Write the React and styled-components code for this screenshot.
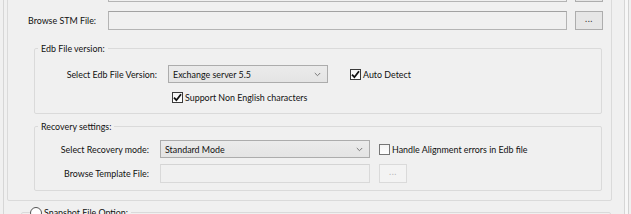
import React from "react";
import styled, { createGlobalStyle } from "styled-components";

const Global = createGlobalStyle`
  html, body { margin: 0; padding: 0; background: #f0f0f0; }
  body { width: 631px; height: 214px; overflow: hidden; font-family: Lato, "Noto Sans", sans-serif; font-size: 8.9px; color: #111; }
  * { box-sizing: border-box; }
`;

const Root = styled.div`
  width: 631px;
  height: 214px;
  overflow: hidden;
  display: flex;
  align-items: flex-start;
`;

const Frame = styled.div`
  margin: -31px 0 0 3px;
  width: 622px;
  height: 260px;
  border-left: 1px solid #d6d6d6;
  border-right: 1px solid #d6d6d6;
  display: flex;
  flex-direction: column;
`;

const Edge = styled.div`
  width: 4px;
  height: 214px;
  background: #f7f7f7;
  border-right: 1px solid #d2d2d2;
`;

const OuterGroup = styled.div`
  margin-left: 3px;
  width: 605px;
  border: 1px solid #dadada;
  border-radius: 2px;
  padding: 13px 7px 9px 20px;
  display: flex;
  flex-direction: column;
`;

const FileRow = styled.div`
  display: flex;
  align-items: center;
  height: 19px;
  margin-bottom: ${(p) => p.$mb || 0}px;
`;

const Label = styled.label`
  width: ${(p) => p.$w}px;
  flex: none;
  text-align: ${(p) => (p.$right ? "right" : "left")};
  margin-right: ${(p) => p.$gap || 0}px;
  white-space: nowrap;
`;

const TextBox = styled.div`
  width: ${(p) => p.$w}px;
  height: 19px;
  flex: none;
  background: #f0f0f0;
  border: 1px solid ${(p) => (p.$disabled ? "#d9d9d9" : "#b4b4b4")};
  border-top-color: ${(p) => (p.$disabled ? "#d4d4d4" : "#a2a2a2")};
`;

const DotsButton = styled.button`
  width: 28px;
  height: 19px;
  flex: none;
  margin-left: ${(p) => p.$ml}px;
  padding: 0 0 4px;
  font-family: inherit;
  font-size: 9px;
  line-height: 1;
  letter-spacing: 0.5px;
  color: ${(p) => (p.disabled ? "#b8b8b8" : "#333")};
  background: ${(p) => (p.disabled ? "#f3f3f3" : "#e6e6e6")};
  border: 1px solid ${(p) => (p.disabled ? "#dadada" : "#adadad")};
  border-radius: 0;
`;

const Group = styled.fieldset`
  margin: ${(p) => p.$mt || 0}px 2px 0 6px;
  padding: ${(p) => p.$pad};
  border: 1px solid #dadada;
  border-radius: 2px;
  min-width: 0;
`;

const Legend = styled.legend`
  margin-left: 3px;
  padding: 0 3px;
  line-height: 13px;
  height: 13px;
`;

const FormRow = styled.div`
  display: flex;
  align-items: center;
  height: ${(p) => p.$h || 18}px;
  margin-top: ${(p) => p.$mt || 0}px;
`;

const Select = styled.div`
  width: ${(p) => p.$w}px;
  height: 18px;
  flex: none;
  display: flex;
  align-items: center;
  justify-content: space-between;
  padding: 0 6px 0 4px;
  background: linear-gradient(#ebebeb, #e4e4e4);
  border: 1px solid #acacac;
`;

const Chevron = () => (
  <svg width="7" height="5" viewBox="0 0 7 5">
    <path d="M0.8 1 L3.5 3.7 L6.2 1" fill="none" stroke="#777" strokeWidth="1" />
  </svg>
);

const Check = styled.span`
  display: inline-flex;
  align-items: center;
  margin-left: ${(p) => p.$ml || 0}px;
  white-space: nowrap;
`;

const Box = styled.span`
  width: 11px;
  height: 11px;
  flex: none;
  margin-right: 2px;
  background: linear-gradient(#f4f4f4, #ffffff);
  border: 1px solid ${(p) => (p.$on ? "#3a3a3a" : "#767676")};
  display: inline-flex;
  align-items: center;
  justify-content: center;
`;

const CheckBox = ({ on, children, ml }) => (
  <Check $ml={ml}>
    <Box $on={on}>
      {on && (
        <svg width="9" height="9" viewBox="0 0 9 9">
          <path d="M1 4.6 L3.4 7.2 L8 1.2" fill="none" stroke="#111" strokeWidth="1.8" />
        </svg>
      )}
    </Box>
    {children}
  </Check>
);

const SnapGroup = styled.fieldset`
  margin: 5px 0 0 17px;
  width: 590px;
  padding: 0;
  height: 40px;
  border: 1px solid #dadada;
  border-radius: 2px;
`;

const RadioLegend = styled.legend`
  margin-left: 8px;
  padding: 0 3px 0 0;
  display: flex;
  align-items: center;
  line-height: 13px;
`;

const Radio = styled.span`
  width: 12px;
  height: 12px;
  border-radius: 50%;
  border: 1px solid #555;
  background: #fff;
  margin-right: 2px;
`;

export default function App() {
  return (
    <Root>
      <Global />
      <Frame>
        <OuterGroup>
          <FileRow $mb={9}>
            <Label $w={80} />
            <TextBox $w={459} />
            <DotsButton $ml={8} />
          </FileRow>
          <FileRow $mb={12}>
            <Label $w={80}>Browse STM File:</Label>
            <TextBox $w={459} />
            <DotsButton $ml={8}>...</DotsButton>
          </FileRow>
          <Group $pad="10px 0 9px 0">
            <Legend>Edb File version:</Legend>
            <FormRow>
              <Label $w={122} $right $gap={11}>Select Edb File Version:</Label>
              <Select $w={160}>
                <span>Exchange server 5.5</span>
                <Chevron />
              </Select>
              <CheckBox on ml={22}>Auto Detect</CheckBox>
            </FormRow>
            <FormRow $h={13} $mt={8}>
              <CheckBox on ml={137}>Support Non English characters</CheckBox>
            </FormRow>
          </Group>
          <Group $pad="7px 0 7px 0" $mt={6}>
            <Legend>Recovery settings:</Legend>
            <FormRow>
              <Label $w={114} $right $gap={11}>Select Recovery mode:</Label>
              <Select $w={210}>
                <span>Standard Mode</span>
                <Chevron />
              </Select>
              <CheckBox ml={9}>Handle Alignment errors in Edb file</CheckBox>
            </FormRow>
            <FormRow $h={19} $mt={6}>
              <Label $w={114} $right $gap={11}>Browse Template File:</Label>
              <TextBox $w={210} $disabled />
              <DotsButton $ml={9} disabled>...</DotsButton>
            </FormRow>
          </Group>
        </OuterGroup>
        <SnapGroup>
          <RadioLegend>
            <Radio />
            Snapshot File Option:
          </RadioLegend>
        </SnapGroup>
      </Frame>
      <Edge />
    </Root>
  );
}
